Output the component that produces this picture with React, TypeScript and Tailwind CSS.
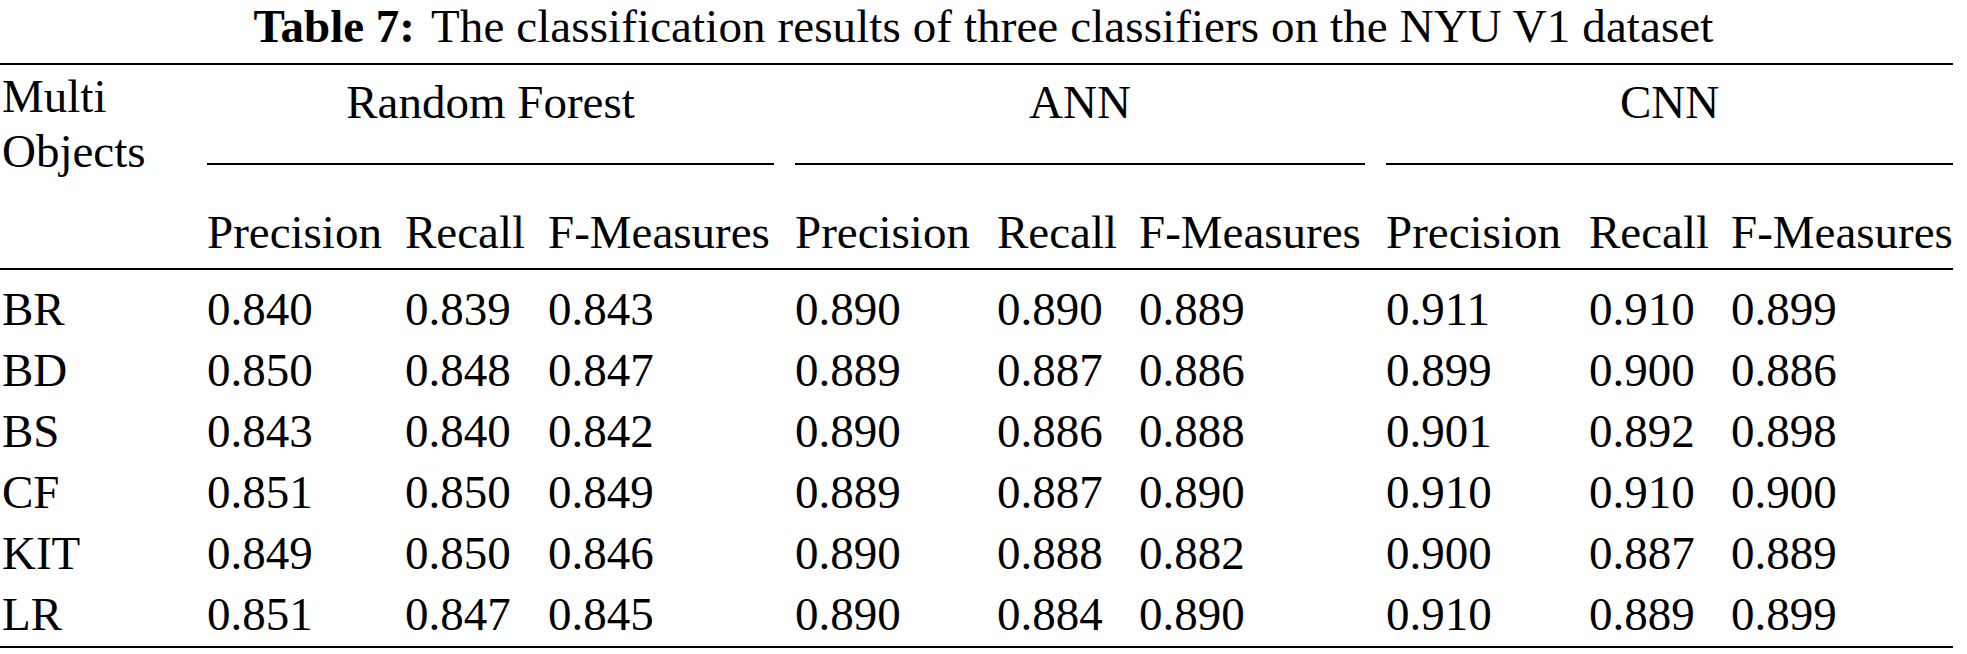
import React from "react";

const cols =
  "grid grid-cols-[207px_198px_143px_247px_202px_142px_247px_203px_142px_222px]";

const groups = [
  { name: "Random Forest", last: false },
  { name: "ANN", last: false },
  { name: "CNN", last: true },
];

const rows = [
  ["BR", "0.840", "0.839", "0.843", "0.890", "0.890", "0.889", "0.911", "0.910", "0.899"],
  ["BD", "0.850", "0.848", "0.847", "0.889", "0.887", "0.886", "0.899", "0.900", "0.886"],
  ["BS", "0.843", "0.840", "0.842", "0.890", "0.886", "0.888", "0.901", "0.892", "0.898"],
  ["CF", "0.851", "0.850", "0.849", "0.889", "0.887", "0.890", "0.910", "0.910", "0.900"],
  ["KIT", "0.849", "0.850", "0.846", "0.890", "0.888", "0.882", "0.900", "0.887", "0.889"],
  ["LR", "0.851", "0.847", "0.845", "0.890", "0.884", "0.890", "0.910", "0.889", "0.899"],
];

const App = () => {
  return (
    <div className="w-[1967px] h-[654px] bg-white text-black font-['Liberation_Serif',serif] text-[47px]">
      <div className="h-[63px] pt-[1px] leading-[50px] text-center whitespace-nowrap">
        <span className="font-bold">Table 7:</span>
        <span className="ml-[16px] tracking-[0.1px]">
          The classification results of three classifiers on the NYU V1 dataset
        </span>
      </div>

      <div className="w-[1953px]">
        <div className="h-[2px] bg-black" />

        {/* header */}
        <div className={`${cols} whitespace-nowrap`}>
          <div className="row-span-2 pt-[4px] pl-[2px] leading-[55px]">
            Multi
            <br />
            Objects
          </div>
          {groups.map((g) => (
            <div
              key={g.name}
              className={`col-span-3 pt-[14px] ${g.last ? "" : "pr-[21px]"}`}
            >
              <div className="leading-[46px] text-center">{g.name}</div>
              <div className="mt-[38px] h-[2px] bg-black" />
            </div>
          ))}
          {groups.map((g) =>
            ["Precision", "Recall", "F-Measures"].map((h) => (
              <div key={g.name + h} className="pt-[44px] pb-[13px] leading-[46px]">
                {h}
              </div>
            ))
          )}
        </div>

        <div className="h-[2px] bg-black" />

        {/* body */}
        <div className="pt-[9px] pb-[1px]">
          {rows.map((r) => (
            <div key={r[0]} className={`${cols} h-[61px] leading-[61px]`}>
              {r.map((c, i) => (
                <div key={i} className={i === 0 ? "pl-[2px]" : ""}>
                  {c}
                </div>
              ))}
            </div>
          ))}
        </div>

        <div className="h-[2px] bg-black" />
      </div>
    </div>
  );
};

export default App;
